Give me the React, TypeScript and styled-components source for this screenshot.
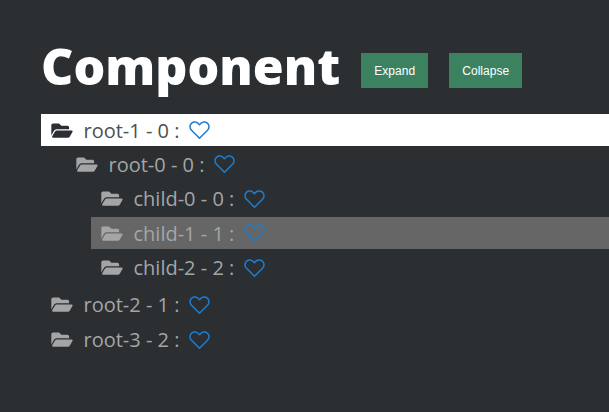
import React from 'react'
import styled, { createGlobalStyle } from 'styled-components'
import { FaFolderOpen } from 'react-icons/fa'

const GlobalStyle = createGlobalStyle`
  html, body {
    background-color: #2b2f32;
    height: 100%;
    margin: 0;
    overflow: hidden;
  }
`

const Page = styled.div`
  box-sizing: border-box;
  font-family: "Open Sans", sans-serif;
  height: 412px;
  padding: 36px 0 0 41px;
  width: 609px;
`

const Header = styled.div`
  align-items: center;
  display: flex;
  height: 60px;
  margin-bottom: 18px;
`

const Title = styled.h1`
  color: #fff;
  font-size: 50px;
  font-weight: 800;
  line-height: 60px;
  margin: 0 21px 0 0;
`

const Button = styled.button`
  background-color: #3c8260;
  border: 0;
  color: #fff;
  font-family: "Liberation Sans", Arial, sans-serif;
  font-size: 12px;
  height: 35px;
  margin: 9px 21px 0 0;
  padding: 0;
  width: ${({ $width }: { $width: number }) => $width}px;
`

const List = styled.ul`
  list-style: none;
  margin: 0;
  padding: 0;
`

const Nested = styled(List)`
  padding-bottom: 1px;
  padding-left: 25px;
`

const Node = styled.li`
  margin-top: 2.4px;
`

const RootNode = styled(Node)`
  margin-top: 3px;
`

type TRow = {
  $state?: 'selected' | 'hovered'
}

const Row = styled.div<TRow>`
  align-items: center;
  background-color: ${({ $state }) => $state === 'selected' ? '#fff' : $state === 'hovered' ? '#666' : 'transparent'};
  color: ${({ $state }) => $state === 'selected' ? '#4a4f54' : '#a3a5a7'};
  display: flex;
  font-size: 20px;
  height: 32px;
  padding-left: 10px;
`

const Folder = styled(FaFolderOpen)<TRow>`
  color: ${({ $state }) => $state === 'selected' ? '#2b2f33' : '#a3a5a7'};
  height: 19px;
  margin-right: 10.5px;
  width: 22px;
`

const Heart = styled.svg`
  fill: none;
  height: 20px;
  margin-left: 10px;
  stroke: #1e7cd0;
  stroke-linejoin: round;
  stroke-width: 1.6;
  width: 21px;
`

type TItem = {
  label: string
  state?: 'selected' | 'hovered'
  children?: TItem[]
}

const tree: TItem[] = [
  {
    label: 'root-1 - 0',
    state: 'selected',
    children: [
      {
        label: 'root-0 - 0',
        children: [
          { label: 'child-0 - 0' },
          { label: 'child-1 - 1', state: 'hovered' },
          { label: 'child-2 - 2' },
        ],
      },
    ],
  },
  { label: 'root-2 - 1' },
  { label: 'root-3 - 2' },
]

const Item = ({ label, state, children }: TItem) => (
  <>
    <Row $state={state}>
      <Folder $state={state} />
      {label} :
      <Heart viewBox="0 0 22 20">
        <path d="M11 18.6 2.6 10.2C.4 8 .6 4.6 2.8 2.8 5 1 8.4 1.2 11 4.4 13.6 1.2 17 1 19.2 2.8 21.4 4.6 21.6 8 19.4 10.2Z" />
      </Heart>
    </Row>
    {children && (
      <Nested>
        {children.map((child) => <Node key={child.label}><Item {...child} /></Node>)}
      </Nested>
    )}
  </>
)

const App = () => (
  <Page>
    <GlobalStyle />
    <Header>
      <Title>Component</Title>
      <Button $width={67}>Expand</Button>
      <Button $width={73}>Collapse</Button>
    </Header>
    <List>
      {tree.map((item) => <RootNode key={item.label}><Item {...item} /></RootNode>)}
    </List>
  </Page>
)

export default App
